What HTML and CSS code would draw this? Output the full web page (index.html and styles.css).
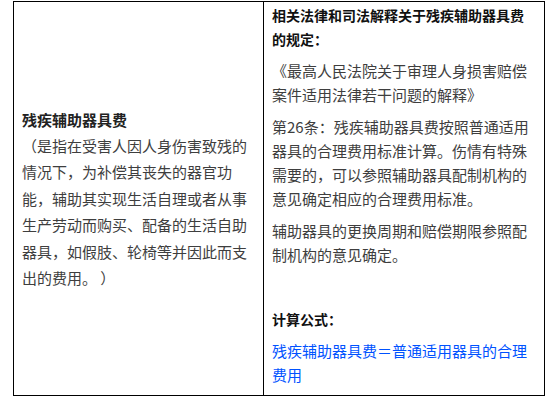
FILE: index.html
```html
<!DOCTYPE html>
<html lang="zh">
<head>
<meta charset="utf-8">
<link rel="stylesheet" href="styles.css">
</head>
<body>
<div class="page">
  <table class="fee-table">
    <colgroup><col class="col-left"><col class="col-right"></colgroup>
    <tr>
      <td class="cell-left">
        <p class="left-text"><strong class="title">残疾辅助器具费</strong><br>（是指在受害人因人身伤害致残的情况下，为补偿其丧失的器官功能，辅助其实现生活自理或者从事生产劳动而购买、配备的生活自助器具，如假肢、轮椅等并因此而支出的费用。 ）</p>
      </td>
      <td class="cell-right">
        <p class="heading">相关法律和司法解释关于残疾辅助器具费的规定：</p>
        <p>《最高人民法院关于审理人身损害赔偿案件适用法律若干问题的解释》</p>
        <p>第26条：残疾辅助器具费按照普通适用器具的合理费用标准计算。伤情有特殊需要的，可以参照辅助器具配制机构的意见确定相应的合理费用标准。</p>
        <p>辅助器具的更换周期和赔偿期限参照配制机构的意见确定。</p>
        <p class="empty"><br></p>
        <p class="heading">计算公式：</p>
        <p class="formula">残疾辅助器具费＝普通适用器具的合理费用</p>
      </td>
    </tr>
  </table>
</div>
</body>
</html>
```
FILE: styles.css
```css
html, body {
  margin: 0;
  padding: 0;
  background: #fff;
}
body {
  font-family: "Noto Sans CJK SC", "Noto Sans", sans-serif;
  font-size: 15px;
  color: #3e3e3e;
}
.page {
  padding: 1px 0 0 13px;
}
.fee-table {
  border-collapse: collapse;
  table-layout: fixed;
  width: 531px;
}
.col-left { width: 250px; }
.col-right { width: 281px; }
.fee-table td {
  border: 1px solid #000;
  padding: 1px 8px 0;
}
.cell-left {
  vertical-align: middle;
}
.cell-right {
  vertical-align: top;
}
.left-text {
  margin: 0;
  line-height: 26.4px;
}
.title {
  font-weight: bold;
  color: #222;
}
.cell-right p {
  margin: 0 0 8px;
  line-height: 24px;
}
.cell-right .heading {
  font-size: 14px;
  font-weight: bold;
  color: #111;
}
.cell-right .formula {
  color: rgb(0, 82, 255);
}
```
